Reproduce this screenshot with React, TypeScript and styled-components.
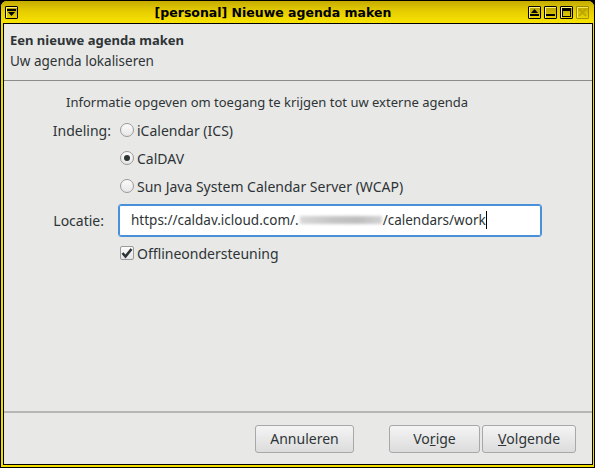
import React from 'react';
import styled, { createGlobalStyle } from 'styled-components';

const GlobalStyle = createGlobalStyle`
  html, body {
    margin: 0;
    padding: 0;
    background: #000;
  }
  #root {
    width: 595px;
    height: 468px;
  }
`;

const Frame = styled.div`
  box-sizing: border-box;
  width: 595px;
  height: 468px;
  display: flex;
  flex-direction: column;
  background: #f2dc00;
  border: 1px solid #000;
  border-radius: 7px 7px 0 0;
  overflow: hidden;
  font-family: 'Noto Sans', 'DejaVu Sans', sans-serif;
  color: #2e3436;
`;

const TitleBar = styled.div`
  height: 22px;
  flex: none;
  display: flex;
  align-items: center;
  padding: 0 5px 0 4px;
  background: linear-gradient(#c4ac00 0%, #e6cc00 45%, #f7e300 100%);
`;

const TitleText = styled.div`
  flex: 1;
  text-align: center;
  font-family: 'DejaVu Sans', sans-serif;
  font-weight: bold;
  font-size: 12.5px;
  color: #000;
`;

const TitleButtons = styled.div`
  display: flex;
  gap: 3px;
`;

const WinButton = styled.div<{ $faded?: boolean }>`
  box-sizing: border-box;
  width: 13px;
  height: 13px;
  border: 1px solid ${p => (p.$faded ? '#8a7a00' : '#000')};
  border-radius: 1px;
  background: linear-gradient(#b59e00, #e9d200);
  box-shadow: inset 1px 1px 0 #fff27a;
  display: flex;
  align-items: center;
  justify-content: center;
  opacity: ${p => (p.$faded ? 0.75 : 1)};
  svg {
    display: block;
  }
`;

const Body = styled.div`
  flex: 1;
  display: flex;
  flex-direction: column;
  background: #e8e8e7;
  border: 1px solid #000;
  margin: 0 1px 2px 2px;
`;

const Header = styled.div`
  padding: 7px 6px 0;
  height: 49px;
  border-bottom: 1px solid #8c8c8c;
`;

const HeaderTitle = styled.div`
  font-weight: bold;
  font-size: 13px;
  line-height: 18px;
  color: #2e3436;
`;

const HeaderSub = styled.div`
  font-size: 13.5px;
  line-height: 18px;
  margin-top: 3px;
`;

const Content = styled.div`
  flex: 1;
  padding: 11px 0 0 48px;
  font-size: 14px;
`;

const Intro = styled.div`
  font-size: 13px;
  line-height: 20px;
  padding-left: 14px;
  margin-bottom: 4px;
  white-space: nowrap;
`;

const FormGrid = styled.div`
  display: grid;
  grid-template-columns: 62px 424px;
  grid-template-rows: 28px 28px 28px 40px 26px;
  column-gap: 4px;
  align-items: center;
`;

const Label = styled.div<{ $shift?: number }>`
  text-align: right;
  padding-right: ${p => p.$shift ?? 0}px;
  white-space: nowrap;
`;

const Choice = styled.label`
  display: flex;
  align-items: center;
  gap: 3px;
  padding-left: 2px;
  white-space: nowrap;
`;

const Radio = styled.span<{ $on?: boolean }>`
  box-sizing: border-box;
  width: 14px;
  height: 14px;
  border-radius: 50%;
  border: 1px solid #9a9a9a;
  background: linear-gradient(#fbfbfb, #e6e6e6);
  display: inline-flex;
  align-items: center;
  justify-content: center;
  &::after {
    content: '';
    width: 6px;
    height: 6px;
    border-radius: 50%;
    background: #2e3436;
    display: ${p => (p.$on ? 'block' : 'none')};
  }
`;

const Check = styled.span`
  box-sizing: border-box;
  width: 14px;
  height: 14px;
  border-radius: 2px;
  border: 1px solid #9a9a9a;
  background: linear-gradient(#fbfbfb, #e6e6e6);
  display: inline-flex;
  align-items: center;
  justify-content: center;
`;

const Input = styled.div`
  box-sizing: border-box;
  height: 33px;
  display: flex;
  align-items: center;
  padding: 0 12px;
  background: #fff;
  border: 1px solid #4a90d9;
  box-shadow: inset 0 0 0 1px #4a90d9;
  border-radius: 3px;
  color: #2e3436;
  font-size: 13.5px;
  white-space: nowrap;
`;

const Obscured = styled.span`
  display: inline-block;
  width: 82px;
  height: 8px;
  margin: 0 1px 0 1px;
  background: linear-gradient(90deg, #d8d8d8, #c4c4c4 40%, #bdbdbd 70%, #d2d2d2);
  filter: blur(1.5px);
`;

const Caret = styled.span`
  display: inline-block;
  width: 1px;
  height: 18px;
  background: #000;
`;

const Footer = styled.div`
  height: 51px;
  border-top: 2px solid #b6b6b6;
  display: flex;
  align-items: center;
  justify-content: flex-end;
  padding: 0 16px 0 0;
`;

const Button = styled.div<{ $w: number; $gapLeft?: number }>`
  box-sizing: border-box;
  width: ${p => p.$w}px;
  height: 28px;
  margin-left: ${p => p.$gapLeft ?? 0}px;
  border: 1px solid #a8a8a8;
  border-radius: 3px;
  background: linear-gradient(#f4f4f4, #dcdcdc);
  display: flex;
  align-items: center;
  justify-content: center;
  font-size: 14px;
  color: #2e3436;
`;

const Mnemonic = styled.span`
  text-decoration: underline;
`;

const MenuIcon = () => (
  <svg width="9" height="9" viewBox="0 0 9 9">
    <rect x="0" y="1" width="9" height="2" fill="#000" />
    <path d="M1 4 H8 L4.5 8 Z" fill="#000" />
  </svg>
);

const ShadeIcon = () => (
  <svg width="9" height="9" viewBox="0 0 9 9">
    <path d="M1 5 H8 L4.5 1 Z" fill="#000" />
    <rect x="0" y="6" width="9" height="2" fill="#000" />
  </svg>
);

const MinIcon = () => (
  <svg width="9" height="9" viewBox="0 0 9 9">
    <rect x="0" y="6" width="9" height="2" fill="#000" />
  </svg>
);

const MaxIcon = () => (
  <svg width="9" height="9" viewBox="0 0 9 9">
    <rect x="0.5" y="0.5" width="8" height="8" fill="none" stroke="#000" />
    <rect x="0" y="0" width="9" height="3" fill="#000" />
  </svg>
);

const CloseIcon = () => (
  <svg width="9" height="9" viewBox="0 0 9 9">
    <path d="M1 1 L8 8 M8 1 L1 8" stroke="#a89400" strokeWidth="1.5" />
  </svg>
);

const CheckMark = () => (
  <svg width="12" height="12" viewBox="0 0 12 12">
    <path d="M1.5 6 L4.5 9.5 L10.5 2" fill="none" stroke="#2e3436" strokeWidth="2.6" />
  </svg>
);

const formats = [
  { label: 'iCalendar (ICS)', on: false },
  { label: 'CalDAV', on: true },
  { label: 'Sun Java System Calendar Server (WCAP)', on: false },
];

const App: React.FC = () => {
  return (
    <>
      <GlobalStyle />
      <Frame>
        <TitleBar>
          <WinButton>
            <MenuIcon />
          </WinButton>
          <TitleText>[personal] Nieuwe agenda maken</TitleText>
          <TitleButtons>
            <WinButton>
              <ShadeIcon />
            </WinButton>
            <WinButton>
              <MinIcon />
            </WinButton>
            <WinButton>
              <MaxIcon />
            </WinButton>
            <WinButton $faded>
              <CloseIcon />
            </WinButton>
          </TitleButtons>
        </TitleBar>
        <Body>
          <Header>
            <HeaderTitle>Een nieuwe agenda maken</HeaderTitle>
            <HeaderSub>Uw agenda lokaliseren</HeaderSub>
          </Header>
          <Content>
            <Intro>Informatie opgeven om toegang te krijgen tot uw externe agenda</Intro>
            <FormGrid>
              {formats.map((f, i) => (
                <React.Fragment key={f.label}>
                  {i === 0 ? <Label $shift={3}>Indeling:</Label> : <div />}
                  <Choice>
                    <Radio $on={f.on} />
                    {f.label}
                  </Choice>
                </React.Fragment>
              ))}
              <Label $shift={10}>Locatie:</Label>
              <Input>
                https://caldav.icloud.com/.
                <Obscured />
                /calendars/work
                <Caret />
              </Input>
              <div />
              <Choice>
                <Check>
                  <CheckMark />
                </Check>
                Offlineondersteuning
              </Choice>
            </FormGrid>
          </Content>
          <Footer>
            <Button $w={99}>Annuleren</Button>
            <Button $w={91} $gapLeft={35}>
              Vo<Mnemonic>r</Mnemonic>ige
            </Button>
            <Button $w={94} $gapLeft={2}>
              <Mnemonic>V</Mnemonic>olgende
            </Button>
          </Footer>
        </Body>
      </Frame>
    </>
  );
};

export default App;
